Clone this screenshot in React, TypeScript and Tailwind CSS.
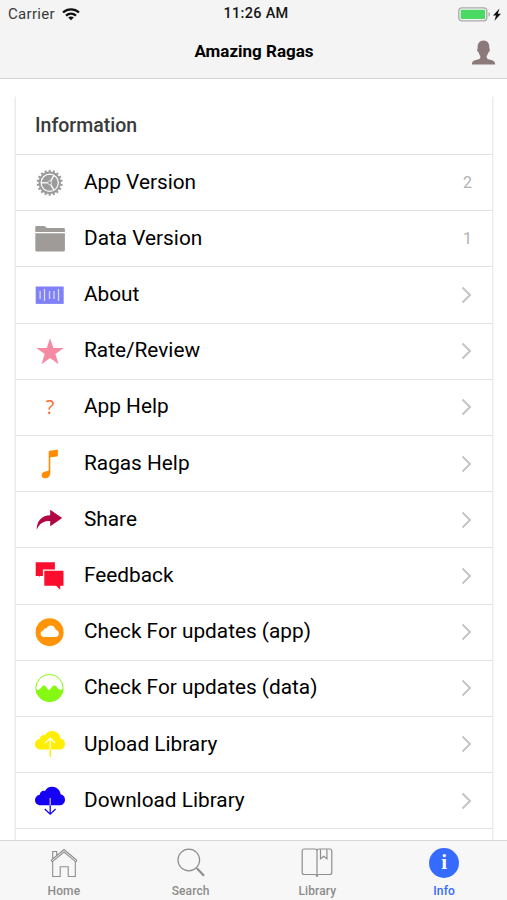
import type { ReactNode } from "react";

const teeth = Array.from({ length: 18 }, (_, i) => i * 20);

const CLOUD =
  "M5.6 20.5C2 20.5 0 18 0 15.2c0-2.9 2.2-4.9 4.7-5.2C5 6.9 7.7 5.5 10 6.2 11.300 3.500 13.800 2 17 2c4.600 0 8.200 3.200 8.600 7.500C28.500 10 30 12.200 30 14.900c0 3.200-2.400 5.600-5.600 5.600z";

const Glyph = ({ children }: { children: ReactNode }) => (
  <svg viewBox="0 0 30 30" className="h-[30px] w-[30px] overflow-visible">
    {children}
  </svg>
);

const GearIcon = () => (
  <Glyph>
    <g transform="translate(14.7 14.8)" stroke="#9b9b9b" fill="none">
      {teeth.map((angle) => (
        <path key={angle} d="M0-10.500V-13" strokeWidth="2" transform={`rotate(${angle})`} />
      ))}
      <circle r="10.200" strokeWidth="2" />
      <circle r="8" fill="#9b9b9b" stroke="none" />
      <g stroke="#fff" strokeWidth="1.300">
        <path d="M0 0V-8.500" transform="rotate(30)" />
        <path d="M0 0V-8.500" transform="rotate(150)" />
        <path d="M0 0V-8.500" transform="rotate(270)" />
      </g>
      <circle r="1.900" fill="#9b9b9b" stroke="#e4e4e4" strokeWidth=".8" />
    </g>
  </Glyph>
);

const FolderIcon = () => (
  <Glyph>
    <g fill="#9e9b99">
      <path d="M.3 8V3.200C.3 2.500.8 2 1.500 2h7.200c.7 0 1 .2 1.500.6l1.100.9c.5.4.8.5 1.500.5h15.700c.8 0 1.400.6 1.400 1.400V8z" />
      <path d="M.3 9.300h29.600v17c0 .7-.6 1.200-1.300 1.200h-27C.9 27.500.3 27 .3 26.300z" />
    </g>
  </Glyph>
);

const BarcodeIcon = () => (
  <Glyph>
    <path fill="#8080f8" d="M.7 6.500h28v17.400H.7z" />
    <path
      d="M4.800 11.500v8M9.200 9.500v12M14.200 11.500v8M18.700 11.500v8M23.200 9.500v12"
      stroke="#d9d9ff"
      strokeWidth="1.300"
      transform="translate(.3 -.5)"
    />
  </Glyph>
);

const StarIcon = () => (
  <Glyph>
    <path
      fill="#f68aa2"
      d="M15.100 2.200l3.300 9.800h10.300l-8.300 6.100 3.200 10.200-8.500-6.200-8.600 6.200 3.200-10.200L1.300 12h10.500z"
    />
  </Glyph>
);

const HelpIcon = () => (
  <span className="flex h-[30px] w-[30px] items-center justify-center font-['Open_Sans',sans-serif] text-[20px] leading-none font-normal text-[#f96a30]">
    ?
  </span>
);

const NoteIcon = () => (
  <Glyph>
    <path
      fill="#ff8c00"
      d="M13.700 3c0-.7.400-1.100 1-1.200l7.300-1c.5-.1.900.2.900.7v4.800c0 .6-.4 1-1 1.100l-6.600.9v15.600c0 3.200-2.200 5.300-5.100 5.300-2.200 0-3.500-1.200-3.500-3 0-2.100 1.500-3.300 3.700-3.700 1.900-.3 3.300-.3 3.300-1.700z"
    />
  </Glyph>
);

const ShareIcon = () => (
  <Glyph>
    <path
      fill="#b20544"
      d="M15.200 4.800l12 8.300-12 8.200v-5.200c-6.300 0-10.200 1.600-13.400 8.600C1.500 15.500 7 10.500 15.200 10.200z"
    />
  </Glyph>
);

const FeedbackIcon = () => (
  <Glyph>
    <g fill="#fb0d2e">
      <path d="M.7 1.200h19.200v7.200H7.900v6.500H5.300L4.200 16v-1.100H.7z" />
      <path d="M9.300 9.700h19.200v15h-3.300v4.100l-4.100-4.100H9.300z" />
    </g>
  </Glyph>
);

const CloudCircleIcon = () => (
  <Glyph>
    <circle cx="14.600" cy="15.200" r="14" fill="#ff9408" />
    <path
      fill="#fff"
      d="M9.300 19.900c-2.200 0-3.700-1.400-3.700-3.200 0-1.800 1.300-3 2.900-3.200.3-1.900 1.700-2.600 3.100-2.200.8-1.700 2.300-2.700 4.100-2.700 2.700 0 4.700 1.900 5 4.500 1.900.1 3.100 1.500 3.100 3.300 0 2-1.400 3.500-3.400 3.500z"
    />
  </Glyph>
);

const WaveCircleIcon = () => (
  <Glyph>
    <circle cx="14.500" cy="15" r="13.600" fill="none" stroke="#85f913" strokeWidth="1" />
    <path
      fill="#85f913"
      d="M.7 16.300c2.300 1.200 3.500.5 4.900-1 1.700-2.700 3.400-3.800 5.100-2l2.200 3.100c.8.800 1.500.7 2.200-.1l2-2.500c1.500-1.900 3.300-1.700 4.700.2l1.200 1.600c1.500 1.600 3.300 1.500 5.400.1A13.900 13.900 0 0 1 .7 16.300z"
    />
  </Glyph>
);

const UploadIcon = () => (
  <Glyph>
    <path fill="#ffee00" d={CLOUD} />
    <path d="M15.200 9.200v11.300M10.200 14l5-5 5 5" fill="none" stroke="#fff" strokeWidth="1.200" />
    <path d="M15.200 20.500v7.300" stroke="#ffee00" strokeWidth="1.400" />
  </Glyph>
);

const DownloadIcon = () => (
  <Glyph>
    <path fill="#1500f5" d={CLOUD} transform="translate(0 -1.200)" />
    <path d="M15.200 12v7.500" stroke="#c4beff" strokeWidth="1.200" />
    <path
      d="M15.200 19.300v8.900M9.800 23l5.400 5.200 5.400-5.200"
      fill="none"
      stroke="#1500f5"
      strokeWidth="1.300"
    />
  </Glyph>
);

type Item = { label: string; icon: ReactNode; note?: string };

const items: Item[] = [
  { label: "App Version", icon: <GearIcon />, note: "2" },
  { label: "Data Version", icon: <FolderIcon />, note: "1" },
  { label: "About", icon: <BarcodeIcon /> },
  { label: "Rate/Review", icon: <StarIcon /> },
  { label: "App Help", icon: <HelpIcon /> },
  { label: "Ragas Help", icon: <NoteIcon /> },
  { label: "Share", icon: <ShareIcon /> },
  { label: "Feedback", icon: <FeedbackIcon /> },
  { label: "Check For updates (app)", icon: <CloudCircleIcon /> },
  { label: "Check For updates (data)", icon: <WaveCircleIcon /> },
  { label: "Upload Library", icon: <UploadIcon /> },
  { label: "Download Library", icon: <DownloadIcon /> },
];

const InfoRow = ({ label, icon, note }: Item) => (
  <li className="flex h-[56.2px] items-center border-b border-[#e2e2e2] pr-5 pl-[19px]">
    {icon}
    <span className="ml-[19px] flex-1 pb-px text-[20.8px] leading-none text-black">{label}</span>
    {note ? (
      <span className="text-[16px] leading-none text-[#b2b2b2]">{note}</span>
    ) : (
      <svg width="11" height="18" viewBox="0 0 11 18" fill="none" stroke="#c4c4c6" strokeWidth="2">
        <path d="M1.500 1.500L9 9l-7.500 7.500" />
      </svg>
    )}
  </li>
);

const StatusBar = () => (
  <div className="grid h-7 grid-cols-3 items-center pr-[6px] pl-[8px] text-[15px] leading-none">
    <div className="flex items-center gap-[7px] text-[#3a3a3a]">
      <span className="tracking-[0.3px]">Carrier</span>
      <svg width="18" height="13" viewBox="0 0 18 13" fill="none" stroke="#111" strokeWidth="2.300">
        <path d="M1 4.500C5.500.3 12.500.3 17 4.500" />
        <path d="M4 7.700c2.900-2.600 7.100-2.600 10 0" />
        <path d="M6.200 9.500c1.600-1.500 4-1.500 5.600 0L9 12.300z" fill="#111" stroke="none" />
      </svg>
    </div>
    <span className="pt-px pl-[3px] text-center text-[14.500px] font-medium tracking-[0.3px] text-[#151515]">
      11:26 AM
    </span>
    <div className="flex items-center justify-end">
      <svg width="43" height="15" viewBox="0 0 43 15">
        <rect x=".8" y=".8" width="28" height="13" rx="3" fill="#f4f4f4" stroke="#a9a9a9" strokeWidth="1.300" />
        <rect x="2.700" y="2.700" width="24.300" height="9.200" rx="1" fill="#4bd964" />
        <path d="M30.500 5.200c2 .5 2 3.700 0 4.200z" fill="#a9a9a9" />
        <path d="M41.500 1.500l-6.500 7h3l-1.500 5.300 6.500-7h-3.200z" fill="#111" />
      </svg>
    </div>
  </div>
);

const Header = () => (
  <header className="h-[79px] shrink-0 border-b border-[#d4d4d4] bg-[#f4f4f4]">
    <StatusBar />
    <div className="grid h-[50px] grid-cols-[1fr_auto_1fr] items-center pr-[11px] pl-3">
      <span />
      <h1 className="pb-[3px] text-[17px] leading-none font-bold text-black">Amazing Ragas</h1>
      <svg width="25" height="25" viewBox="0 0 25 25" className="mb-[2px] justify-self-end">
        <path
          fill="#8c7979"
          d="M.8 24.600c0-2.700 1.600-3.800 4-4.500 3.300-.9 4.600-1.100 4.600-3.300 0-1.400-1.200-2-1.700-4.400-.9-.3-1.400-1-1.500-2.400-.1-.9.100-1.400.5-1.700C6.300 3.600 8.400.5 12.500.5s6.200 3.100 5.800 7.800c.4.300.6.800.5 1.700-.1 1.400-.6 2.100-1.500 2.400-.5 2.400-1.700 3-1.700 4.400 0 2.200 1.300 2.400 4.600 3.300 2.400.7 4 1.800 4 4.500z"
        />
      </svg>
    </div>
  </header>
);

const HomeIcon = () => (
  <svg width="28" height="30" viewBox="0 0 28 30" fill="none" stroke="#8e8e8e" strokeWidth="1.100">
    <path d="M1 12.500L14 1.500l13 11M1 12.500l1.200 1.300L14 4l11.800 9.800 1.200-1.300M2.700 11V3.500h4v4.200" />
    <path d="M2.700 13.500v15h7.500v-9.800h8v9.800h7.100v-15" />
  </svg>
);

const SearchIcon = () => (
  <svg width="28" height="30" viewBox="0 0 28 30" fill="none" stroke="#8e8e8e">
    <circle cx="11.800" cy="12" r="10.800" strokeWidth="1.200" />
    <path d="M18.800 19.500l2.300 2" strokeWidth="1.200" />
    <path d="M20.300 20.800l6.700 6.900" strokeWidth="2.200" />
  </svg>
);

const LibraryIcon = () => (
  <svg width="32" height="30" viewBox="0 0 32 30" fill="none" stroke="#8e8e8e" strokeWidth="1.200">
    <path d="M16 29V3c0-1.300-.8-2-2-2H3.200C2 1 1.200 1.800 1.200 3v21.500c0 1.200.8 2 2 2h10.500c1.300 0 2.300.8 2.300 2.500 0-1.700 1-2.500 2.300-2.500h10.500c1.200 0 2-.8 2-2V3c0-1.200-.8-2-2-2H18c-1.200 0-2 .7-2 2" />
    <path d="M19.500 1.200v9.600l3.200-2.500 3.200 2.500V1.200" />
  </svg>
);

const InfoIcon = () => (
  <span className="flex h-[30px] w-[30px] items-center justify-center rounded-full bg-[#356bff] pb-px font-['Liberation_Serif',serif] text-[21px] leading-none font-bold text-white">
    i
  </span>
);

const tabs = [
  { label: "Home", icon: <HomeIcon /> },
  { label: "Search", icon: <SearchIcon /> },
  { label: "Library", icon: <LibraryIcon /> },
  { label: "Info", icon: <InfoIcon />, active: true },
];

const TabBar = () => (
  <nav className="grid h-[60px] shrink-0 grid-cols-4 border-t border-[#d8d8d8] bg-[#f7f7f7]">
    {tabs.map(({ label, icon, active }) => (
      <div key={label} className="flex flex-col items-center pt-[7px] pl-px">
        {icon}
        <span
          className={`mt-[7px] text-[12px] leading-none font-medium tracking-[0.1px] ${active ? "text-[#356bff]" : "text-[#8c8c8c]"}`}
        >
          {label}
        </span>
      </div>
    ))}
  </nav>
);

export default function App() {
  return (
    <div className="flex h-[900px] w-[507px] flex-col overflow-hidden bg-white font-[Roboto,sans-serif]">
      <Header />
      <main className="min-h-0 flex-1 overflow-hidden px-4 pt-[15px]">
        <section className="h-[800px] w-[476px] rounded-t-[2px] bg-white shadow-[0_2px_3px_rgba(0,0,0,0.24)]">
          <h2 className="flex h-[61px] items-center border-b border-[#e2e2e2] pt-[3px] pl-[19px] text-[19.500px] leading-none font-medium text-[#3a3a3a]">
            Information
          </h2>
          <ul>
            {items.map((item) => (
              <InfoRow key={item.label} {...item} />
            ))}
          </ul>
        </section>
      </main>
      <TabBar />
    </div>
  );
}
